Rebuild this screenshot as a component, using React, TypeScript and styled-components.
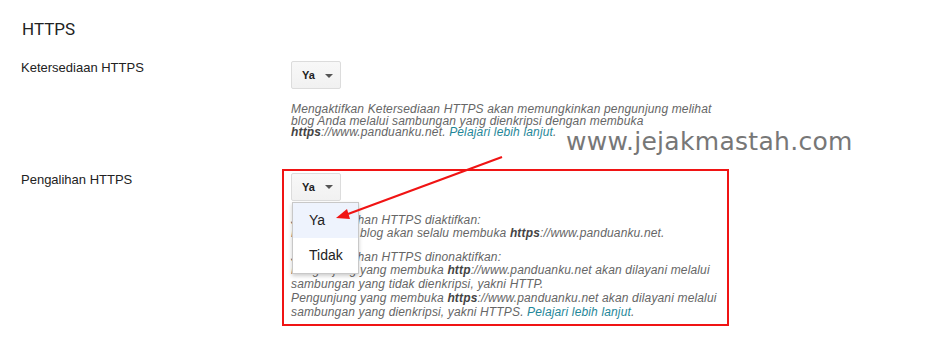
import React from 'react'
import styled, { createGlobalStyle } from 'styled-components'

const GlobalStyle = createGlobalStyle`
  html, body {
    margin: 0;
    padding: 0;
    background: #fff;
  }
  body {
    font-family: Arial, "Liberation Sans", sans-serif;
    color: #222;
  }
`

const Page = styled.div`
  position: relative;
  width: 935px;
  height: 343px;
  overflow: hidden;
  padding: 18px 0 0 21px;
  box-sizing: border-box;
`

const Heading = styled.h2`
  margin: 0 0 21px 1px;
  font-family: Roboto, "Liberation Sans", sans-serif;
  font-weight: 400;
  font-size: 17px;
  line-height: 22px;
  color: #222;
`

const SettingRow = styled.div<{ $gap?: number }>`
  display: grid;
  grid-template-columns: 270px 1fr;
  margin-bottom: ${(p) => p.$gap ?? 0}px;
`

const Label = styled.div`
  font-size: 13px;
  line-height: 14px;
  color: #222;
`

const Control = styled.div`
  display: flex;
  flex-direction: column;
  align-items: flex-start;
`

const Highlight = styled(Control)`
  margin: -4px 0 0 -9px;
  padding: 2px 7px 5px 7px;
  width: 447px;
  box-sizing: border-box;
  border: 2px solid #f01414;
`

const SelectWrap = styled.div`
  position: relative;
`

const SelectButton = styled.div`
  width: 50px;
  height: 28px;
  box-sizing: border-box;
  display: flex;
  align-items: center;
  padding-left: 10px;
  gap: 10px;
  border: 1px solid #dcdcdc;
  border-radius: 2px;
  background: linear-gradient(#f8f8f8, #f1f1f1);
  font-size: 11px;
  font-weight: bold;
  color: #222;
`

const Caret = styled.span`
  width: 0;
  height: 0;
  border-left: 4px solid transparent;
  border-right: 4px solid transparent;
  border-top: 4px solid #555;
  margin-top: 1px;
`

const Menu = styled.div`
  position: absolute;
  top: 29px;
  left: 1px;
  width: 65px;
  background: #fff;
  border: 1px solid #c8c8c8;
  box-shadow: 0 2px 4px rgba(0, 0, 0, 0.2);
  z-index: 2;
`

const MenuItem = styled.div<{ $active?: boolean }>`
  height: 35px;
  display: flex;
  align-items: center;
  padding-left: 16px;
  font-size: 14px;
  color: #222;
  background: ${(p) => (p.$active ? '#eef3fd' : '#fff')};
`

const Help = styled.p<{ $lh: number; $top: number }>`
  margin: ${(p) => p.$top}px 0 0 0;
  font-size: 12px;
  letter-spacing: 0.15px;
  font-style: italic;
  line-height: ${(p) => p.$lh}px;
  color: #666;
  white-space: nowrap;
  b {
    color: #444;
  }
`

const Link = styled.a`
  color: #1f8799;
  text-decoration: none;
`

const Watermark = styled.div`
  position: absolute;
  left: 566px;
  top: 127px;
  font-family: "DejaVu Sans", sans-serif;
  font-size: 25px;
  color: #777;
  letter-spacing: 0.3px;
`

const Arrow = styled.svg`
  position: absolute;
  left: 0;
  top: 0;
  pointer-events: none;
  z-index: 3;
`

export default function App() {
  return (
    <Page>
      <GlobalStyle />
      <Heading>HTTPS</Heading>

      <SettingRow $gap={34}>
        <Label>Ketersediaan HTTPS</Label>
        <Control>
          <SelectButton>
            Ya <Caret />
          </SelectButton>
          <Help $lh={11.5} $top={15}>
            Mengaktifkan Ketersediaan HTTPS akan memungkinkan pengunjung melihat
            <br />
            blog Anda melalui sambungan yang dienkripsi dengan membuka
            <br />
            <b>https</b>://www.panduanku.net. <Link>Pelajari lebih lanjut</Link>.
          </Help>
        </Control>
      </SettingRow>

      <SettingRow>
        <Label>Pengalihan HTTPS</Label>
        <Highlight>
          <SelectWrap>
            <SelectButton>
              Ya <Caret />
            </SelectButton>
            <Menu>
              <MenuItem $active>Ya</MenuItem>
              <MenuItem>Tidak</MenuItem>
            </Menu>
          </SelectWrap>
          <Help $lh={13.5} $top={13}>
            Jika Pengalihan HTTPS diaktifkan:
            <br />
            Pengunjung blog akan selalu membuka <b>https</b>://www.panduanku.net.
          </Help>
          <Help $lh={13.8} $top={10}>
            Jika Pengalihan HTTPS dinonaktifkan:
            <br />
            Pengunjung yang membuka <b>http</b>://www.panduanku.net akan dilayani melalui
            <br />
            sambungan yang tidak dienkripsi, yakni HTTP.
            <br />
            Pengunjung yang membuka <b>https</b>://www.panduanku.net akan dilayani melalui
            <br />
            sambungan yang dienkripsi, yakni HTTPS. <Link>Pelajari lebih lanjut</Link>.
          </Help>
        </Highlight>
      </SettingRow>

      <Watermark>www.jejakmastah.com</Watermark>

      <Arrow width="935" height="343" viewBox="0 0 935 343">
        <line x1="502" y1="157" x2="348" y2="214" stroke="#f01414" strokeWidth="2.2" />
        <polygon points="336,218 347,209 350,219" fill="#f01414" />
      </Arrow>
    </Page>
  )
}
